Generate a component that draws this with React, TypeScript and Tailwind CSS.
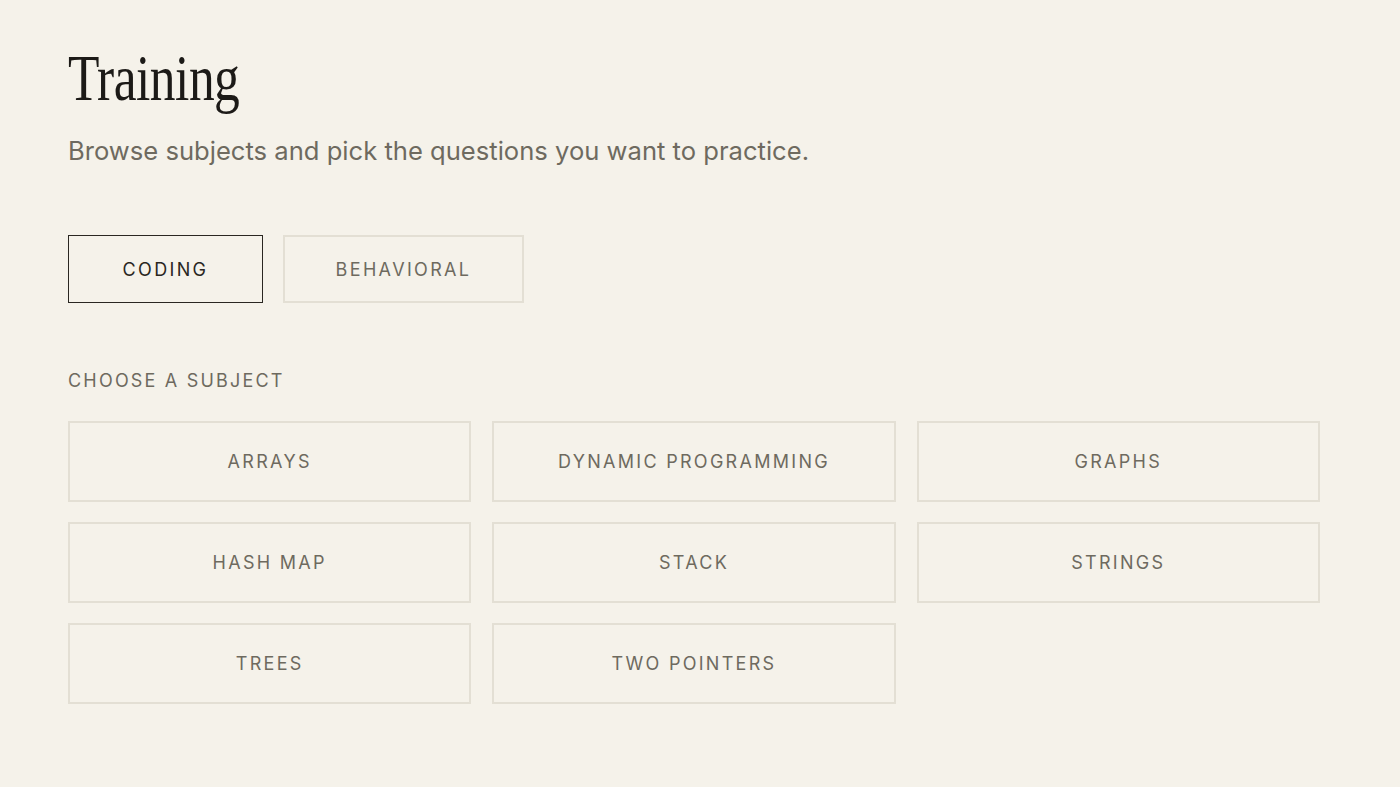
const subjects = [
  "Arrays",
  "Dynamic Programming",
  "Graphs",
  "Hash Map",
  "Stack",
  "Strings",
  "Trees",
  "Two Pointers",
];

const sans = "font-['Inter','Noto_Sans',sans-serif]";

export default function App() {
  return (
    <div className={`min-h-screen bg-[#f5f2ea] ${sans}`}>
      <main className="px-[68px] pt-[38px] pr-[80px]">
        <h1 className="font-['Liberation_Serif',serif] text-[66px] leading-[80px] text-[#1c1a17]">
          <span className="inline-block origin-left scale-x-[0.78] tracking-[-0.01em]">Training</span>
        </h1>
        <p className="mt-[16px] text-[25.6px] leading-[34px] text-[#6e6a5f]">
          Browse subjects and pick the questions you want to practice.
        </p>

        <div className="mt-[67px] flex gap-5">
          <button className="h-[68px] w-[195px] border-[1.5px] border-[#2a2722] text-[18px] uppercase tracking-[0.13em] text-[#2a2722]">
            Coding
          </button>
          <button className="h-[68px] w-[241px] border-2 border-[#e3dfd4] text-[18px] uppercase tracking-[0.13em] text-[#6e6a5f]">
            Behavioral
          </button>
        </div>

        <h2 className="mt-[68px] text-[18px] uppercase leading-[20px] tracking-[0.122em] text-[#6e6a5f]">
          Choose a subject
        </h2>

        <div className="mt-[30px] grid grid-cols-3 gap-x-[21px] gap-y-[20px]">
          {subjects.map((s) => (
            <button
              key={s}
              className="h-[81px] border-2 border-[#e3dfd4] text-[18px] uppercase tracking-[0.127em] text-[#6e6a5f]"
            >
              {s}
            </button>
          ))}
        </div>
      </main>
    </div>
  );
}
